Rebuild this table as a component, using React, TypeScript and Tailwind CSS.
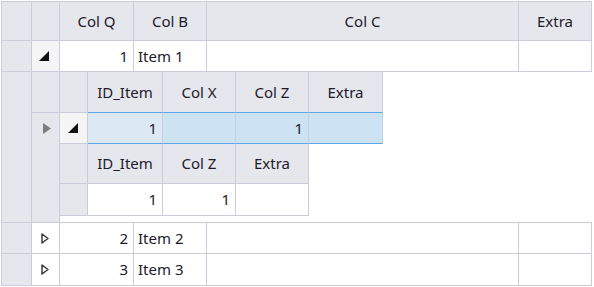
import React from "react";

// master grid lines
const line = "border-[#cbccd9]";
const head = "bg-[#e6e7ed]";

function ExpandedGlyph() {
  return (
    <svg width="10" height="10" viewBox="0 0 10 10">
      <polygon points="10,0 10,10 0,10" fill="#111" />
    </svg>
  );
}

function CollapsedGlyph() {
  return (
    <svg width="8" height="11" viewBox="0 0 8 11">
      <polygon points="1,1 7,5.5 1,10" fill="none" stroke="#333" strokeWidth="1.4" strokeLinejoin="round" />
    </svg>
  );
}

function CurrentGlyph() {
  return (
    <svg width="8" height="11" viewBox="0 0 8 11">
      <polygon points="0,0 8,5.5 0,11" fill="#7d7d7d" />
    </svg>
  );
}

function DataRow({ id, name, last }: { id: number; name: string; last?: boolean }) {
  return (
    <div className={`flex ${last ? "h-[32px]" : "h-[31px]"}`}>
      <div className={`w-[30px] ${head} border-r border-b ${line}`} />
      <div className={`w-[28px] bg-white border-r border-b ${line} flex items-center justify-center pr-[2px]`}>
        <CollapsedGlyph />
      </div>
      <div className={`w-[74px] border-r border-b ${line} flex items-center justify-end pr-[5px]`}>{id}</div>
      <div className={`w-[73px] border-r border-b ${line} flex items-center pl-[4px]`}>{name}</div>
      <div className={`w-[312px] border-r border-b ${line}`} />
      <div className={`w-[73px] border-r border-b ${line}`} />
    </div>
  );
}

export default function App() {
  return (
    <div className="w-[594px] h-[287px] bg-white pl-px pt-px font-['Noto_Sans',sans-serif] text-[15px] text-[#1c1a2b] leading-none">
      <div className={`w-[591px] border-l border-t ${line}`}>
        {/* master header */}
        <div className={`flex h-[39px] ${head}`}>
          <div className={`w-[30px] border-r border-b ${line}`} />
          <div className={`w-[28px] border-r border-b ${line}`} />
          <div className={`w-[74px] border-r border-b ${line} flex items-center justify-center`}>Col Q</div>
          <div className={`w-[73px] border-r border-b ${line} flex items-center justify-center`}>Col B</div>
          <div className={`w-[312px] border-r border-b ${line} flex items-center justify-center`}>Col C</div>
          <div className={`w-[73px] border-r border-b ${line} flex items-center justify-center`}>Extra</div>
        </div>

        {/* row 1, expanded */}
        <div className="flex h-[31px]">
          <div className={`w-[30px] ${head} border-r border-b ${line}`} />
          <div className={`w-[28px] bg-[#f5f5f5] border-r border-b ${line} flex items-center justify-center pr-[3px]`}>
            <ExpandedGlyph />
          </div>
          <div className={`w-[74px] border-r border-b ${line} flex items-center justify-end pr-[5px]`}>1</div>
          <div className={`w-[73px] border-r border-b ${line} flex items-center pl-[4px]`}>Item 1</div>
          <div className={`w-[312px] border-r border-b ${line}`} />
          <div className={`w-[73px] border-r border-b ${line}`} />
        </div>

        {/* detail view of row 1 */}
        <div className={`flex h-[151px] border-b ${line}`}>
          <div className={`w-[30px] ${head} border-r ${line}`} />
          <div className="flex-1 flex flex-col">
            <div className="flex h-[41px]">
              <div className={`w-[28px] ${head} border-r border-b ${line}`} />
              <div className={`w-[28px] ${head} border-r border-b ${line}`} />
              <div className={`w-[75px] ${head} border-r ${line} border-b border-b-[#5ba8e8] flex items-center justify-center`}>ID_Item</div>
              <div className={`w-[73px] ${head} border-r ${line} border-b border-b-[#5ba8e8] flex items-center justify-center`}>Col X</div>
              <div className={`w-[73px] ${head} border-r ${line} border-b border-b-[#5ba8e8] flex items-center justify-center`}>Col Z</div>
              <div className={`w-[74px] ${head} border-r ${line} border-b border-b-[#5ba8e8] flex items-center justify-center`}>Extra</div>
            </div>
            <div className="flex flex-1">
              <div className={`w-[28px] ${head} border-r ${line}`}>
                <div className="h-[31px] flex items-center justify-center pl-[2px]">
                  <CurrentGlyph />
                </div>
              </div>
              <div className="flex flex-col items-start">
                {/* current detail row */}
                <div className="flex h-[31px]">
                  <div className={`w-[28px] bg-[#f5f5f5] border-r border-b ${line} flex items-center justify-center pr-[2px]`}>
                    <ExpandedGlyph />
                  </div>
                  <div className="w-[75px] bg-[#dce9f5] border-r border-r-[#bcd5ea] border-b border-b-[#5ba8e8] flex items-center justify-end pr-[5px]">1</div>
                  <div className="w-[73px] bg-[#cde2f2] border-r border-r-[#bcd5ea] border-b border-b-[#5ba8e8]" />
                  <div className="w-[73px] bg-[#cde2f2] border-r border-r-[#bcd5ea] border-b border-b-[#5ba8e8] flex items-center justify-end pr-[5px]">1</div>
                  <div className="w-[74px] bg-[#cde2f2] border-r border-r-[#bcd5ea] border-b border-b-[#5ba8e8]" />
                </div>
                {/* nested detail */}
                <div className="flex h-[40px]">
                  <div className={`w-[28px] ${head} border-r border-b ${line}`} />
                  <div className={`w-[75px] ${head} border-r border-b ${line} flex items-center justify-center`}>ID_Item</div>
                  <div className={`w-[73px] ${head} border-r border-b ${line} flex items-center justify-center`}>Col Z</div>
                  <div className={`w-[73px] ${head} border-r border-b ${line} flex items-center justify-center`}>Extra</div>
                </div>
                <div className="flex h-[32px]">
                  <div className={`w-[28px] ${head} border-r border-b ${line}`} />
                  <div className={`w-[75px] border-r border-b ${line} flex items-center justify-end pr-[5px]`}>1</div>
                  <div className={`w-[73px] border-r border-b ${line} flex items-center justify-end pr-[5px]`}>1</div>
                  <div className={`w-[73px] border-r border-b ${line}`} />
                </div>
              </div>
            </div>
          </div>
        </div>

        <DataRow id={2} name="Item 2" />
        <DataRow id={3} name="Item 3" last />
      </div>
    </div>
  );
}
